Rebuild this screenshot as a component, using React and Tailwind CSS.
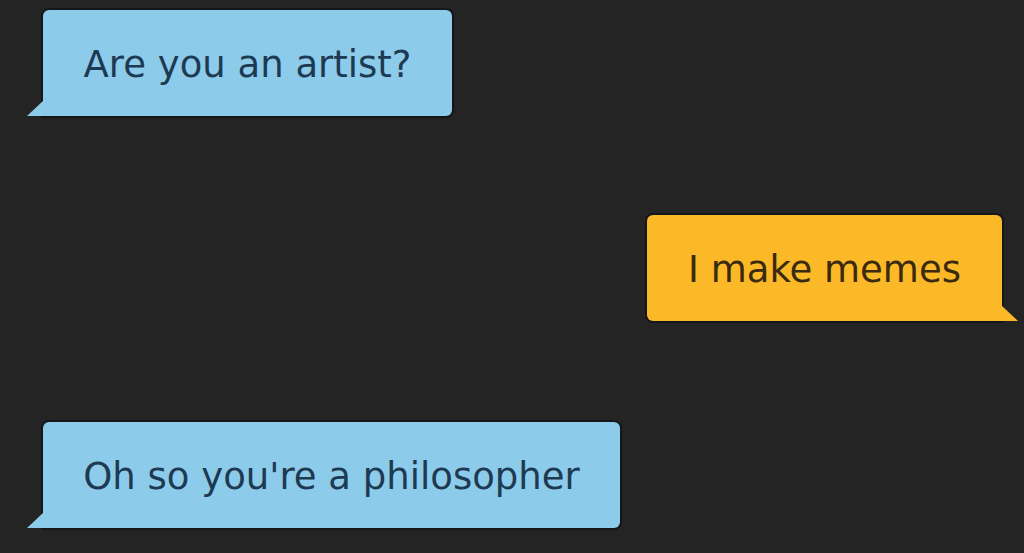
import React from 'react';

function Bubble({ text, side, width }) {
  const isLeft = side === 'left';
  return (
    <div
      className={`relative h-[106px] rounded-md flex items-center justify-center shadow-[0_0_0_2px_rgba(10,14,18,0.6)] ${
        isLeft ? 'bg-[#8dcbeb] text-[#1d3a52] rounded-bl-none' : 'bg-[#fbb927] text-[#3b2a0e] rounded-br-none'
      }`}
      style={{ width }}
    >
      <span className="text-[37px] leading-none pt-[3px] font-['DejaVu_Sans',sans-serif]">{text}</span>
      {isLeft ? (
        <svg className="absolute left-[-16px] bottom-0" width="17" height="16" viewBox="0 0 17 16">
          <polygon points="17,0 0,16 17,16" fill="#8dcbeb" />
        </svg>
      ) : (
        <svg className="absolute right-[-16px] bottom-0" width="17" height="16" viewBox="0 0 17 16">
          <polygon points="0,0 17,16 0,16" fill="#fbb927" />
        </svg>
      )}
    </div>
  );
}

export default function App() {
  return (
    <div className="w-[1024px] h-[553px] bg-[#242424] overflow-hidden flex flex-col pt-[10px] pl-[43px] pr-[22px]">
      <Bubble text="Are you an artist?" side="left" width={409} />
      <div className="mt-[99px] self-end">
        <Bubble text="I make memes" side="right" width={355} />
      </div>
      <div className="mt-[101px]">
        <Bubble text="Oh so you're a philosopher" side="left" width={577} />
      </div>
    </div>
  );
}
